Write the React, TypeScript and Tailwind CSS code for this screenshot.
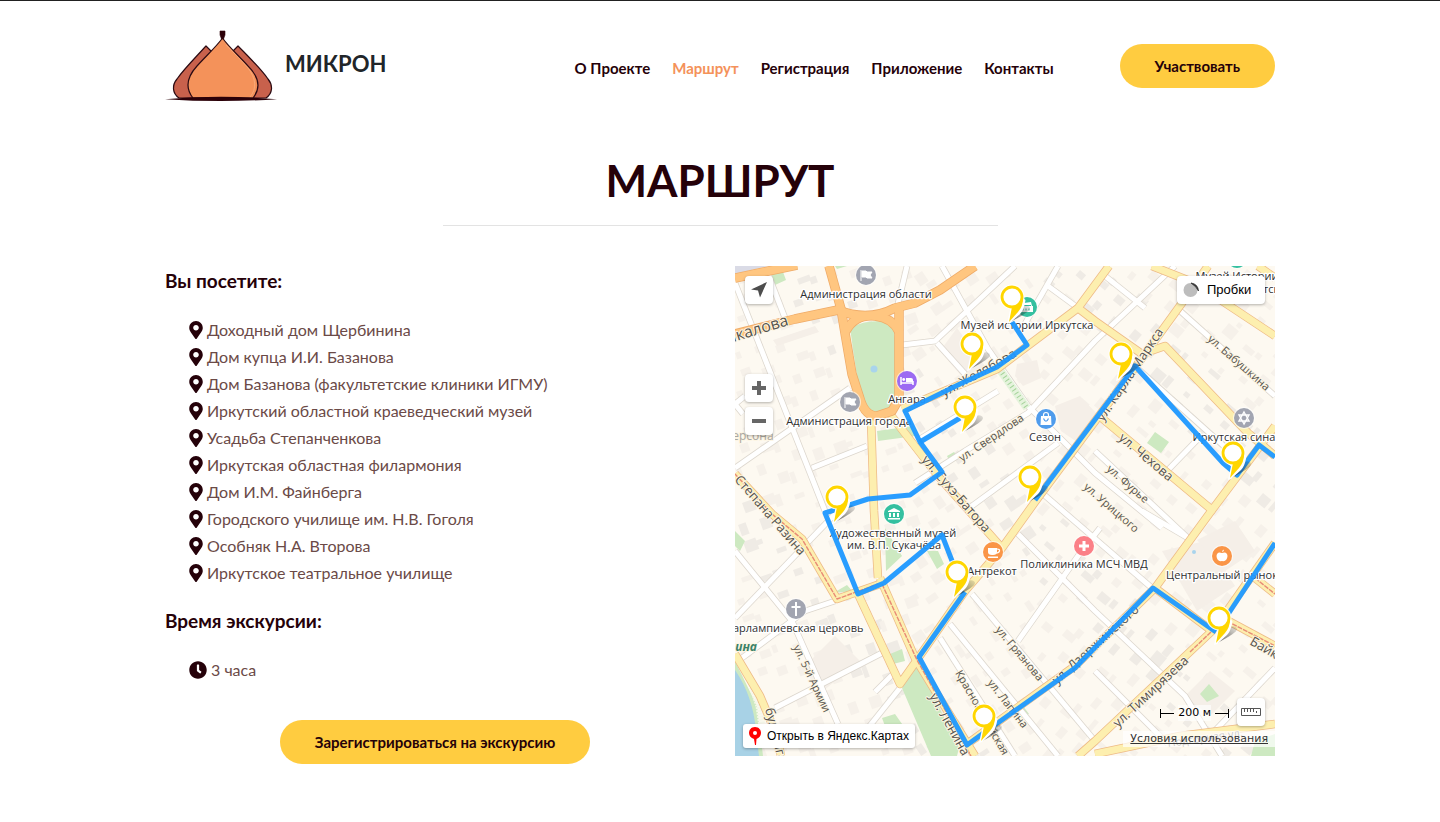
import React from "react";
import { FaMapMarkerAlt, FaClock } from "react-icons/fa";

const NAV = ["О Проекте", "Маршрут", "Регистрация", "Приложение", "Контакты"];

const PLACES = [
  "Доходный дом Щербинина",
  "Дом купца И.И. Базанова",
  "Дом Базанова (факультетские клиники ИГМУ)",
  "Иркутский областной краеведческий музей",
  "Усадьба Степанченкова",
  "Иркутская областная филармония",
  "Дом И.М. Файнберга",
  "Городского училище им. Н.В. Гоголя",
  "Особняк Н.А. Второва",
  "Иркутское театральное училище",
];

const WHITE_ROADS = [
  "M0 17 L90 245",
  "M33 8 L50 52",
  "M0 202 L115 122",
  "M77 202 L132 180",
  "M10 130 L0 138 L8 148",
  "M0 352 L100 248",
  "M0 285 L57 355 L103 458",
  "M7 392 L70 345 L100 335",
  "M40 442 L147 387",
  "M133 462 L165 422",
  "M140 426 L157 409",
  "M167 79 L200 75 L280 0",
  "M207 0 L253 83 L293 140 L333 180 L360 207 L427 262",
  "M202 77 L230 108",
  "M287 63 L323 0",
  "M313 20 L343 42",
  "M180 217 L230 185 L293 147 L360 75 L440 0",
  "M230 245 L323 177",
  "M185 173 L263 125",
  "M307 227 L417 322",
  "M370 10 L410 42",
  "M443 43 L540 130",
  "M403 103 L500 190",
  "M433 204 L463 173",
  "M360 185 L453 272",
  "M283 268 L360 345 L450 430 L487 490",
  "M283 375 L343 290 L365 262",
  "M237 328 L360 475",
  "M215 358 L323 490",
  "M205 372 L280 490",
  "M360 405 L433 478",
  "M473 472 L540 402",
  "M407 245 L453 272",
  "M172 0 L162 42",
];

const YELLOW_ROADS = [
  "M136 152 L139 245 L143 312",
  "M145 312 L180 392 L240 490",
  "M123 328 L165 418 L182 394",
  "M0 208 L37 248 L67 273 L102 333 L145 318",
  "M0 388 L25 430 L42 470 L46 490",
  "M167 143 L262 103 L343 42 L374 0",
  "M343 42 L360 55 L407 88 L430 80 L513 167 L540 190",
  "M473 0 L447 37 L410 88 L300 236 L267 282 L230 325 L184 391",
  "M417 0 L460 17 L540 70",
  "M523 0 L540 12",
  "M362 148 L477 244 L540 160",
  "M477 244 L420 322 L340 400 L232 478",
  "M420 322 L477 365 L360 475 L343 490",
  "M480 362 L540 277",
  "M488 352 L540 380",
  "M520 312 L540 328",
  "M360 488 L445 470 L540 458",
  "M155 148 L203 210 L267 282",
];

const ORANGE_ROADS = [
  "M0 12 L62 -1",
  "M0 68 L60 53 L103 44 Q133 56 160 42 L180 37 L205 24 L240 0",
  "M94 0 L106 43 L110 67 L117 108 L125 133 Q130 150 142 150 L157 145 L164 133 L164 42",
  "M111 65 Q120 48 140 50 Q158 52 164 66",
];

const TRAM_LINES = [
  "M0 208 L37 248 L67 273 L102 333 L143 318",
  "M147 318 L182 394 L236 490",
  "M455 386 L477 365",
  "M492 355 L540 380",
  "M520 312 L540 328",
];

const ROUTE = [
  "M277 56 L292 79 L262 101 L225 118 L170 145 L185 176 L207 206 L175 229 L133 233 L90 247 L123 328 L149 317 L207 269 L219 300",
  "M185 176 L225 152",
  "M230 326 L184 391 L232 479 L250 466 L340 402 L418 322 L481 366",
  "M488 356 L540 277",
  "M300 234 L400 100 L488 197 L502 209 L524 179 L540 191",
];

const PINS = [
  [277, 31], [237, 78], [230, 141], [295, 211], [386, 88],
  [498, 187], [102, 231], [222, 306], [249, 450], [484, 352],
];

const STREETS: [string, number, number, number, number][] = [
  ["Чкалова", -8, 78, -17, 16],
  ["ул. Желябова", 209, 131, -29, 13],
  ["ул. Свердлова", 227, 196, -34, 11],
  ["ул. Сухэ-Батора", 186, 194, 49, 13],
  ["Степана Разина", -1, 214, 49, 13],
  ["ул. Карла Маркса", 368, 156, -56, 13],
  ["ул. Бабушкина", 472, 74, 41, 11],
  ["ул. Чехова", 383, 173, 40, 13],
  ["ул. Фурье", 371, 204, 41, 11],
  ["ул. Урицкого", 348, 222, 41, 11],
  ["ул. Дзержинского", 322, 419, -42, 13],
  ["ул. Грязнова", 260, 364, 50, 11],
  ["ул. Лапина", 252, 417, 52, 11],
  ["Красноармейская", 220, 407, 60, 11],
  ["ул. Ленина", 194, 430, 61, 13],
  ["ул. Тимирязева", 383, 462, -43, 13],
  ["ул. 5-й Армии", 58, 381, 65, 11],
  ["Байкальская", 514, 378, 30, 13],
  ["бул. Гагарина", 30, 443, 76, 13],
  ["Подгорная ул.", 433, 481, -8, 11],
];

const LABELS: [string, number, number][] = [
  ["Администрация области", 131, 32],
  ["Музей истории Иркутска", 292, 63],
  ["Ангара", 172, 137],
  ["Администрация города", 114, 159],
  ["Сезон", 310, 175],
  ["Иркутская синагога", 510, 175],
  ["Художественный музей", 158, 271],
  ["им. В.П. Сукачёва", 159, 283],
  ["Антрекот", 257, 309],
  ["Поликлиника МСЧ МВД", 349, 302],
  ["Центральный рынок", 487, 313],
  ["Харлампиевская церковь", 60, 366],
  ["Музей Истории", 502, 14],
  ["города Иркутска", 506, 27],
];

// Deterministic scatter of building footprints, aligned with the street grid.
const BUILDINGS = Array.from({ length: 620 }, (_, i) => {
  const col = i % 31;
  const row = Math.floor(i / 31);
  const a = (i * 73 + 19) % 97;
  const b = (i * 41 + 7) % 89;
  return {
    x: col * 18 + (a % 9),
    y: row * 25 + (b % 14),
    w: 5 + (a % 9),
    h: 5 + (b % 8),
    turn: col < 10 ? -20 : col < 17 ? 56 : 40,
    dark: a % 4 === 0,
  };
});

function Poi({ x, y, color, children }: { x: number; y: number; color: string; children: React.ReactNode }) {
  return (
    <g transform={`translate(${x} ${y})`}>
      <circle r="11" fill="#fff" opacity="0.6" />
      <circle r="10" fill={color} />
      {children}
    </g>
  );
}

function Pin({ x, y }: { x: number; y: number }) {
  return (
    <g transform={`translate(${x} ${y})`}>
      <path d="M-2 25 L10 9 Q17 7 18 11 Q18 15 -2 25Z" fill="url(#pin-shadow)" />
      <path d="M-5 27 L-1.500 11 L10 0 L13.500 3 Q12 13 8 17 L-2 26Z" fill="#fff" />
      <circle r="12.500" fill="#fff" opacity="0.9" />
      <path d="M-3 25 L0 10 L11 2 Q11 9 6 15Z" fill="#ffd600" />
      <circle r="10" fill="#fff" stroke="#ffd600" strokeWidth="2.800" />
    </g>
  );
}

function MapDrawing() {
  return (
    <svg
      className="block h-full w-full"
      viewBox="0 0 540 490"
      preserveAspectRatio="xMidYMid slice"
      role="img"
      aria-label="Карта маршрута"
      fontFamily="'Open Sans', 'Noto Sans', sans-serif"
    >
      <defs>
        <linearGradient id="pin-shadow" x1="0" y1="1" x2="1" y2="0">
          <stop offset="0" stopColor="#222" stopOpacity="0.7" />
          <stop offset="1" stopColor="#222" stopOpacity="0.1" />
        </linearGradient>
      </defs>
      <rect width="540" height="490" fill="#fdf9f1" />
      {BUILDINGS.map((r, i) => (
        <rect
          key={i}
          x={r.x}
          y={r.y}
          width={r.w}
          height={r.h}
          fill={r.dark ? "#efebe5" : "#f6f1ea"}
          transform={`rotate(${r.turn} ${r.x} ${r.y})`}
        />
      ))}
      <g fill="#f5efe8">
        <path d="M38 74 L80 60 L84 66 L42 80Z M282 98 L302 94 L306 112 L288 120 L280 110Z" />
        <path d="M320 140 L345 130 L362 148 L345 178 L326 165Z M427 285 L470 275 L500 320 L462 345Z" />
        <path d="M462 274 L500 255 L520 285 L490 305Z M75 395 L100 370 L125 395 L88 425Z" />
        <path d="M205 85 L222 62 L250 100 L228 112Z M450 430 L475 405 L500 425 L475 450Z" />
      </g>
      <path d="M0 0 H33 L0 8Z" fill="#dadbe6" />
      <g fill="#cde9c1">
        <path d="M115 62 Q128 54 150 55 Q160 60 160 72 L161 138 Q150 148 134 147 L124 125Z" />
        <path d="M142 165 L178 160 L180 170 L143 175Z M35 8 L48 6 L51 14 L40 19Z M100 0 L112 0 L102 3Z" />
        <path d="M150 262 L167 290 L151 305Z M155 388 L167 383 L170 395 L158 398Z M100 326 L112 319 L118 326Z" />
        <path d="M167 422 L180 392 L224 482 L222 490 L196 490Z M147 452 L160 448 L172 465 L150 460Z" />
        <path d="M420 166 L434 176 L426 187 L412 177Z M474 418 L484 430 L472 436 L465 428Z" />
        <path d="M0 265 L10 275 L5 285 L0 280Z M192 285 L203 285 L209 298 L202 303Z M520 475 L540 468 V490 H516Z" />
        <path d="M212 190 L219 186 L221 189 L214 194Z M288 440 L294 448 L286 452Z M0 395 L22 440 L28 490 H18 L0 430Z" />
      </g>
      <path d="M0 404 Q18 430 21 465 L24 490 H0Z" fill="#a8d2e6" />
      <path d="M2 392 L14 410 L24 440 L28 468" fill="none" stroke="#f4f7e9" strokeWidth="7" strokeDasharray="2 1" />
      <circle cx="139" cy="103" r="3.5" fill="#a9d4ec" />
      <circle cx="459" cy="286" r="2" fill="#a9d4ec" />

      <g fill="none" strokeLinejoin="round">
        {WHITE_ROADS.map((d) => <path key={d} d={d} stroke="#dcd6cd" strokeWidth="6.500" />)}
        {WHITE_ROADS.map((d) => <path key={d} d={d} stroke="#fff" strokeWidth="5" />)}
        <path d="M265 104 L292 142" stroke="#e5f3dc" strokeWidth="8" />
        <path d="M265 104 L292 142" stroke="#a5d39a" strokeWidth="5" strokeDasharray="1 3" />
        {YELLOW_ROADS.map((d) => <path key={d} d={d} stroke="#eeba86" strokeWidth="8.500" />)}
        {YELLOW_ROADS.map((d) => <path key={d} d={d} stroke="#fdefaf" strokeWidth="7" />)}
        {ORANGE_ROADS.map((d) => <path key={d} d={d} stroke="#efab68" strokeWidth="9.500" />)}
        {ORANGE_ROADS.map((d) => <path key={d} d={d} stroke="#ffc680" strokeWidth="8" />)}
        {TRAM_LINES.map((d) => <path key={d} d={d} stroke="#e88a76" strokeWidth="1.400" strokeDasharray="5 1" />)}
      </g>

      <g fill="#55524d" stroke="#fdf6e4" strokeWidth="2" paintOrder="stroke" strokeLinejoin="round">
        {STREETS.map(([name, x, y, turn, size]) => (
          <text key={name} fontSize={size} transform={`translate(${x} ${y}) rotate(${turn})`}>{name}</text>
        ))}
        <text x="-9" y="174" fontSize="12" fill="#aaa7a2">Герсона</text>
        <text x="22" y="385" fontSize="12" fontWeight="700" fontStyle="italic" fill="#3b8168" textAnchor="end">Гагарина</text>
      </g>

      <g fill="#fff">
        <Poi x={131} y={9} color="#a2a5b1">
          <path d="M-5 -5 V6 M-4 -4 H0 L1 -3 H6 L4 0 L6 3 H1 L0 2 H-4Z" stroke="#fff" strokeWidth="1" />
        </Poi>
        <Poi x={115} y={136} color="#a2a5b1">
          <path d="M-5 -5 V6 M-4 -4 H0 L1 -3 H6 L4 0 L6 3 H1 L0 2 H-4Z" stroke="#fff" strokeWidth="1" />
        </Poi>
        <Poi x={292} y={41} color="#35c0a0">
          <path d="M-4 -1 L-3 -4 L4 -5 L5 -1 H6 V5 H-7 V-1Z" />
          <path d="M-4 1.500 V3.500 M-1 1.500 V3.500 M2 1.500 V3.500 M-3 -1.500 H4" stroke="#35c0a0" />
        </Poi>
        <Poi x={502} y={-8} color="#35c0a0">
          <path d="M-5 0 H5 V3 H-5Z" />
        </Poi>
        <Poi x={172} y={115} color="#9c6bf2">
          <path d="M-6 -4 V4 M6 4 V0 M-6 2 H6" stroke="#fff" strokeWidth="1.500" />
          <circle cx="-3.300" cy="-1.500" r="1.400" />
          <path d="M-1 -3 H4 Q6 -3 6 -1 V1 H-1Z" />
        </Poi>
        <Poi x={311} y={153} color="#4f9cec">
          <path d="M-5 -3 H5 L5.500 6 H-5.500Z" />
          <path d="M-2.500 -3 V-4 Q-2.500 -6.500 0 -6.500 Q2.500 -6.500 2.500 -4 V-3" fill="none" stroke="#fff" strokeWidth="1.200" />
          <path d="M-2.500 -0.500 Q0 5 2.500 -0.500" fill="none" stroke="#4f9cec" strokeWidth="1.200" />
        </Poi>
        <Poi x={509} y={152} color="#a2a5b1">
          <path d="M0 -6 L5 3 H-5Z M0 6 L-5 -3 H5Z" fill="none" stroke="#fff" strokeWidth="1.400" />
        </Poi>
        <Poi x={159} y={248} color="#35c0a0">
          <path d="M-6 -3 L0 -6 L6 -3 V-2 H-6Z M-5 -1 H-3 V3 H-5Z M-1 -1 H1 V3 H-1Z M3 -1 H5 V3 H3Z M-6 4 H6 V5.500 H-6Z" />
        </Poi>
        <Poi x={258} y={286} color="#fa9547">
          <path d="M-5 -4 H4 V0 Q4 3 0 3 H-1 Q-5 3 -5 0Z M-5 4.500 H5 V6 H-5Z" />
          <path d="M4 -3 Q7 -3 6.500 -1 Q6 1 3 1" fill="none" stroke="#fff" strokeWidth="1.200" />
        </Poi>
        <Poi x={349} y={280} color="#fb8087">
          <path d="M-1.500 -5 H1.500 V-1.500 H5 V1.500 H1.500 V5 H-1.500 V1.500 H-5 V-1.500 H-1.500Z" />
        </Poi>
        <Poi x={487} y={290} color="#fa9547">
          <path d="M0 -3 Q-5 -5 -5.500 0 Q-5 6 0 5 Q5 6 5.500 0 Q5 -5 0 -3Z M0 -4 Q0 -6 2 -6.500 Q2 -4.500 0 -4Z" />
        </Poi>
        <Poi x={61} y={343} color="#a2a5b1">
          <path d="M0 -7 V7 M-4.500 -2 H4.500" stroke="#fff" strokeWidth="2" />
        </Poi>
      </g>

      <g fill="#2f2f2f" stroke="#fff" strokeWidth="2.500" paintOrder="stroke" strokeLinejoin="round" fontSize="11" textAnchor="middle">
        {LABELS.map(([name, x, y]) => <text key={name} x={x} y={y}>{name}</text>)}
      </g>

      <g fill="none" stroke="#1e98ff" strokeWidth="5" strokeLinejoin="round">
        {ROUTE.map((d) => <path key={d} d={d} strokeOpacity="0.950" />)}
      </g>
      {PINS.map(([x, y]) => <Pin key={`${x}-${y}`} x={x} y={y} />)}
    </svg>
  );
}

function Logo() {
  return (
    <svg width="112" height="72" viewBox="0 0 112 72" aria-hidden="true">
      <g stroke="#2b0a12" strokeWidth="1.200" strokeLinejoin="round">
        <path d="M41 16 L46 21 L60 68 H14 C7 63 7 55 12 49 C19 39 31 27 41 16Z" fill="#c8614c" />
        <path d="M73 16 L68 21 L60 68 H101 C108 63 108 55 103 49 C96 39 84 27 73 16Z" fill="#c8614c" />
        <path d="M57.500 8 C52 16 42 25 32 36 C22 47 20 58 28 68 H88 C96 58 94 47 83 36 C73 25 63 16 57.500 8Z" fill="#f4925a" />
      </g>
      <path d="M61 15 C70 24 77 31 83 38 C91 48 92 59 85 67" fill="none" stroke="#f9b184" strokeWidth="0.700" />
      <path d="M55 1 H60 V5 L58.500 9 H56.500 L55 5Z" fill="#2b0008" stroke="#2b0008" strokeWidth="0.600" />
      <path d="M0 69.200 Q56 64.500 112 69.200 Q56 73 0 69.200Z" fill="#2b0008" />
    </svg>
  );
}

function Ruler() {
  return (
    <svg width="20" height="8" viewBox="0 0 20 8" fill="none" stroke="#555" aria-hidden="true">
      <path d="M0.500 0.500 H19.500 V7.500 H0.500Z M3.500 1 V4 M6.500 1 V4 M9.500 1 V4 M12.500 1 V4 M15.500 3 V5" />
    </svg>
  );
}

const control = "absolute flex h-7 w-7 items-center justify-center rounded bg-white text-[#5b5b5b] shadow-[0_1px_3px_rgba(0,0,0,0.3)]";
const pill = "h-11 rounded-full bg-[#ffcc40] px-[35px] text-[15px] font-bold";

export default function App() {
  return (
    <div className="min-h-screen border-t border-[#212121] bg-white font-['Lato','Noto_Sans',sans-serif] text-[#250109]">
      <div className="mx-auto max-w-[1140px] px-[15px]">
        <header className="flex items-start justify-between pt-[29px]">
          <a href="#home" className="flex items-start gap-2">
            <Logo />
            <span className="pt-4 text-[22px] leading-9 font-bold text-[#212529]">МИКРОН</span>
          </a>
          <div className="flex items-start gap-[66px] pt-[14px]">
            <nav className="flex gap-[22px] pt-3 text-[15px] leading-6 font-bold">
              {NAV.map((item) => (
                <a key={item} href="#nav" className={item === "Маршрут" ? "text-[#f4925a]" : ""}>{item}</a>
              ))}
            </nav>
            <button type="button" className={pill}>Участвовать</button>
          </div>
        </header>

        <main>
          <h1 className="mx-auto mt-12 max-w-[555px] border-b border-[#e3e3e3] pb-[15px] text-center text-[44px] leading-[60px] font-bold">МАРШРУТ</h1>
          <div className="grid grid-cols-1 gap-[30px] pt-10 md:grid-cols-2">
            <section>
              <h2 className="text-[19px] leading-[30px] font-bold">Вы посетите:</h2>
              <ul className="mt-5 pl-6 text-[16px] leading-[27px] text-[#6b4a47]">
                {PLACES.map((place) => (
                  <li key={place} className="flex items-center gap-1">
                    <FaMapMarkerAlt className="h-[18px] w-[14px] text-[#250109]" />
                    {place}
                  </li>
                ))}
              </ul>
              <h2 className="mt-5 text-[19px] leading-[30px] font-bold">Время экскурсии:</h2>
              <p className="mt-5 flex items-center gap-1 pl-6 text-[16px] leading-[27px] text-[#6b4a47]">
                <FaClock className="h-[18px] w-[18px] text-[#250109]" />
                3 часа
              </p>
              <div className="mt-[37px] flex justify-center">
                <button type="button" className={pill}>Зарегистрироваться на экскурсию</button>
              </div>
            </section>

            <section className="relative h-[490px] overflow-hidden font-['Liberation_Sans',sans-serif] text-black">
              <MapDrawing />
              <button type="button" aria-label="Моё местоположение" className={`${control} top-[10px] left-[10px]`}>
                <svg width="18" height="18" viewBox="0 0 18 18" aria-hidden="true">
                  <path d="M17 1 L1 8.500 L8 9.500 L10 16.500Z" fill="#4d4d4d" />
                </svg>
              </button>
              <button type="button" aria-label="Приблизить" className={`${control} top-[108px] left-[10px]`}>
                <svg width="14" height="14" viewBox="0 0 14 14" aria-hidden="true">
                  <path d="M5 0 H9 V5 H14 V9 H9 V14 H5 V9 H0 V5 H5Z" fill="#666" />
                </svg>
              </button>
              <button type="button" aria-label="Отдалить" className={`${control} top-[141px] left-[10px]`}>
                <svg width="14" height="4" viewBox="0 0 14 4" aria-hidden="true">
                  <path d="M0 0 H14 V4 H0Z" fill="#666" />
                </svg>
              </button>
              <button type="button" className="absolute top-[10px] right-[10px] flex h-7 w-[88px] items-center gap-2 rounded bg-white pl-[6px] text-[13px] shadow-[0_1px_3px_rgba(0,0,0,0.3)]">
                <svg width="16" height="16" viewBox="0 0 16 16" aria-hidden="true">
                  <circle cx="7.500" cy="8" r="7" fill="#bdbdbd" />
                  <path d="M8 1 Q15 2 15.500 9 Q13 4 8 1Z" fill="#333" stroke="#333" strokeWidth="0.800" />
                </svg>
                Пробки
              </button>
              <a href="#map" className="absolute bottom-2 left-2 flex h-6 items-center gap-[6px] rounded-[3px] bg-white px-[6px] text-[12px] shadow-[0_1px_3px_rgba(0,0,0,0.3)]">
                <svg width="12" height="18" viewBox="0 0 12 18" aria-hidden="true">
                  <path d="M6 0 C2 0 0 3 0 6 C0 9 2 11 5 12 L6 18 H7 L7.500 12 C10 11 12 9 12 6 C12 3 10 0 6 0Z" fill="#f00" />
                  <circle cx="6" cy="6" r="2" fill="#fff" />
                </svg>
                Открыть в Яндекс.Картах
              </a>
              <div className="absolute right-[46px] bottom-[35px] flex h-4 items-center gap-1 font-['DejaVu_Sans',sans-serif] text-[11px]">
                <span className="flex items-center border-l border-black py-1"><i className="block w-[13px] border-t border-black" /></span>
                <span className="bg-white/60">200 м</span>
                <span className="flex items-center border-r border-black py-1"><i className="block w-[13px] border-t border-black" /></span>
              </div>
              <button type="button" aria-label="Измерить расстояние" className={`${control} right-[10px] bottom-[30px]`}>
                <Ruler />
              </button>
              <a href="#terms" className="absolute right-0 bottom-[9px] bg-white/70 px-[7px] font-['DejaVu_Sans',sans-serif] text-[11px] leading-4 text-[#333] underline">Условия использования</a>
            </section>
          </div>
        </main>
      </div>
    </div>
  );
}
